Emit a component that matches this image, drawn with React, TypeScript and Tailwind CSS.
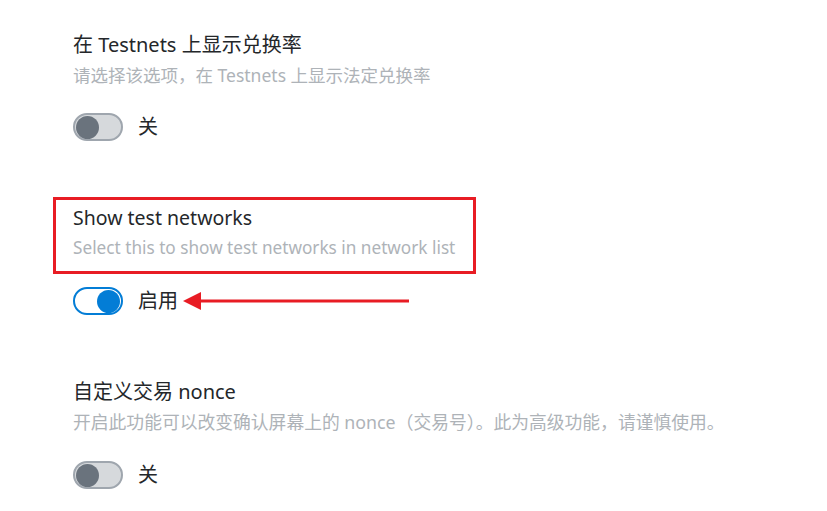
import React from "react";

const font = { fontFamily: '"Noto Sans", "Noto Sans CJK SC", sans-serif' };

function Toggle({ on }: { on: boolean }) {
  return on ? (
    <div className="w-[50px] h-[28px] rounded-full border-2 border-[#037dd6] bg-white flex items-center justify-end px-[1px]">
      <div className="w-[23px] h-[23px] rounded-full bg-[#037dd6]" />
    </div>
  ) : (
    <div className="w-[50px] h-[28px] rounded-full border-2 border-[#9fa6ae] bg-[#d6d9dc] flex items-center justify-start px-[1px]">
      <div className="w-[23px] h-[23px] rounded-full bg-[#6a737d]" />
    </div>
  );
}

function Arrow() {
  return (
    <svg width="228" height="20" viewBox="0 0 228 20" className="ml-[5px]">
      <polygon points="0,10 18,1 18,19" fill="#e81c24" />
      <rect x="16" y="8.5" width="210" height="3" fill="#e81c24" />
    </svg>
  );
}

export default function App() {
  return (
    <div className="w-[827px] h-[511px] bg-white overflow-hidden flex flex-col pt-[33px]" style={font}>
      <div className="pl-[73px] flex flex-col">
        <div className="text-[20px] leading-[24px] text-[#24272a]">在 Testnets 上显示兑换率</div>
        <div className="mt-[6px] text-[17.5px] leading-[24px] text-[#aeb3b8]">请选择该选项，在 Testnets 上显示法定兑换率</div>
        <div className="mt-[26px] flex items-center gap-[15px]">
          <Toggle on={false} />
          <span className="text-[20px] leading-[24px] text-[#24272a]">关</span>
        </div>
      </div>

      <div className="mt-[56px] ml-[53px] w-[423px] border-[3px] border-[#e81c24] pl-[17px] pt-[6px] pb-[11px] flex flex-col">
        <div className="text-[19.5px] leading-[24px] text-[#24272a]">Show test networks</div>
        <div className="mt-[6px] text-[17.2px] leading-[24px] text-[#aeb3b8]">Select this to show test networks in network list</div>
      </div>
      <div className="pl-[73px] mt-[13px] flex items-center">
        <Toggle on={true} />
        <span className="ml-[15px] text-[20px] leading-[24px] text-[#24272a]">启用</span>
        <Arrow />
      </div>

      <div className="pl-[73px] mt-[65px] flex flex-col">
        <div className="text-[20px] leading-[24px] text-[#24272a]">自定义交易 nonce</div>
        <div className="mt-[6px] text-[17.8px] leading-[24px] text-[#aeb3b8]">开启此功能可以改变确认屏幕上的 nonce（交易号）。此为高级功能，请谨慎使用。</div>
        <div className="mt-[27px] flex items-center gap-[15px]">
          <Toggle on={false} />
          <span className="text-[20px] leading-[24px] text-[#24272a]">关</span>
        </div>
      </div>
    </div>
  );
}
